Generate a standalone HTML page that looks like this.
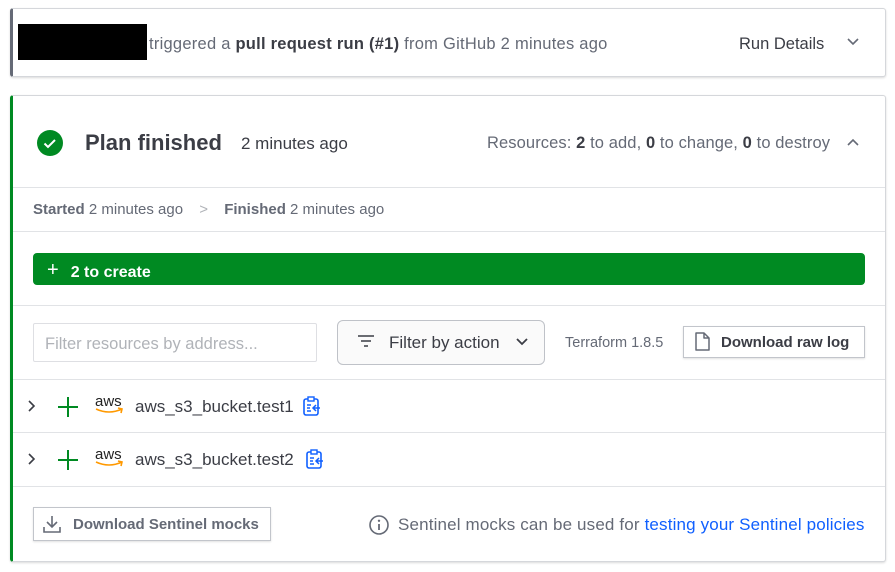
<!DOCTYPE html>
<html><head><meta charset="utf-8"><style>
*{box-sizing:border-box;margin:0;padding:0}
body{width:895px;height:572px;background:#fff;font-family:"Liberation Sans",sans-serif;color:#656a76;position:relative;overflow:hidden}
.abs{position:absolute;white-space:nowrap}
.card{position:absolute;background:#fff;border:1px solid #d5d7db;border-radius:3px;box-shadow:0 1px 2px rgba(0,0,0,.15)}
.hr{position:absolute;left:13px;width:872px;height:1px;background:#e1e3e6}
b{color:#3b3d45}
.btn{position:absolute;border:1px solid #c2c5cb;background:#fff;box-shadow:0 1px 2px rgba(0,0,0,.12)}
</style></head><body>
<div class="card" style="left:10px;top:8px;width:876px;height:69px;border-left:3px solid #656a76"></div>
<div class="abs" style="left:18px;top:24px;width:129px;height:36px;background:#000"></div>
<div class="abs" style="left:149px;top:35px;font-size:16.5px;letter-spacing:0.25px">triggered a <b>pull request run (#1)</b> from GitHub 2 minutes ago</div>
<div class="abs" style="left:739px;top:35px;font-size:16.5px;color:#3b3d45">Run Details</div>
<svg class="abs" style="left:846px;top:37px" width="14" height="10"><path d="M2 2l5 5 5-5" fill="none" stroke="#656a76" stroke-width="1.6"/></svg>

<div class="card" style="left:10px;top:95px;width:876px;height:467px;border-left:3px solid #008a22"></div>
<svg class="abs" style="left:36px;top:129px" width="28" height="28"><circle cx="14" cy="14" r="13" fill="#008a22"/><path d="M8.5 14.5l3.5 3.5 7-7" fill="none" stroke="#fff" stroke-width="2"/></svg>
<div class="abs" style="left:85px;top:130px;font-size:22px;font-weight:bold;color:#3b3d45">Plan finished</div>
<div class="abs" style="left:241px;top:134px;font-size:17px;color:#3b3d45">2 minutes ago</div>
<div class="abs" style="left:487px;top:134px;font-size:16.5px;letter-spacing:0.1px">Resources: <b>2</b> to add, <b>0</b> to change, <b>0</b> to destroy</div>
<svg class="abs" style="left:846px;top:137px" width="14" height="10"><path d="M2 8l5-5 5 5" fill="none" stroke="#656a76" stroke-width="1.6"/></svg>
<div class="hr" style="top:187px"></div>
<div class="abs" style="left:33px;top:201px;font-size:15px"><b style="color:#656a76">Started</b> 2 minutes ago <span style="color:#b0b3b8;margin:0 12px">&gt;</span> <b style="color:#656a76">Finished</b> 2 minutes ago</div>
<div class="hr" style="top:231px"></div>
<div class="abs" style="left:33px;top:253px;width:832px;height:32px;background:#008a22;border-radius:4px;color:#fff;font-size:16px;font-weight:bold;padding:7px 0 0 14px"><span style="font-size:20px;font-weight:normal;margin-right:12px;position:relative;top:-1px">+</span>2 to create</div>
<div class="hr" style="top:305px"></div>
<div class="abs" style="left:33px;top:323px;width:284px;height:39px;border:1px solid #dedfe3;border-radius:2px;color:#b0b3b8;font-size:16.5px;padding:11px 0 0 11px">Filter resources by address...</div>
<div class="abs" style="left:337px;top:320px;width:208px;height:45px;border:1px solid #bfc2c8;border-radius:6px;background:#fafafa;font-size:17px;color:#3b3d45;padding:12px 0 0 51px">Filter by action</div>
<svg class="abs" style="left:357px;top:333px" width="18" height="16"><path d="M1 3h16M4 8h10M7 13h4" stroke="#3b3d45" stroke-width="1.6"/></svg>
<svg class="abs" style="left:515px;top:337px" width="14" height="10"><path d="M2 2l5 5 5-5" fill="none" stroke="#3b3d45" stroke-width="1.8"/></svg>
<div class="abs" style="left:565px;top:335px;font-size:14.5px">Terraform 1.8.5</div>
<div class="btn" style="left:683px;top:326px;width:182px;height:32px;font-size:15px;font-weight:bold;color:#3b3d45;padding:7px 0 0 37px">Download raw log</div>
<svg class="abs" style="left:694px;top:332px" width="16" height="20"><path d="M2 1h8l5 5v12H2z M10 1v5h5" fill="none" stroke="#656a76" stroke-width="1.5" stroke-linejoin="round"/></svg>
<div class="hr" style="top:379px"></div>
<div class="hr" style="top:432px"></div>
<div class="hr" style="top:486px"></div>

<svg class="abs" style="left:27px;top:399px" width="10" height="14"><path d="M2 2l5 5-5 5" fill="none" stroke="#3b3d45" stroke-width="1.6"/></svg>
<svg class="abs" style="left:57px;top:396px" width="22" height="22"><path d="M11 1v20M1 11h20" stroke="#008a22" stroke-width="2"/></svg>
<div class="abs" style="left:95px;top:393px;font-size:15px;color:#222">aws</div>
<svg class="abs" style="left:94px;top:407px" width="32" height="8"><path d="M2 2q13 6 26 0M24 1l4 1-1 4" fill="none" stroke="#f90" stroke-width="1.6"/></svg>
<div class="abs" style="left:135px;top:397px;font-size:17px;color:#3b3d45">aws_s3_bucket.test1</div>
<svg class="abs" style="left:302px;top:396px" width="20" height="20"><rect x="2" y="3" width="14" height="16" rx="2" fill="none" stroke="#1060ff" stroke-width="1.6"/><rect x="6" y="1" width="6" height="4" fill="#fff" stroke="#1060ff" stroke-width="1.4"/><path d="M5 9h4M5 12h3M5 15h4M18 12h-7M14 9l-3 3 3 3" fill="none" stroke="#1060ff" stroke-width="1.5"/></svg>

<svg class="abs" style="left:27px;top:452px" width="10" height="14"><path d="M2 2l5 5-5 5" fill="none" stroke="#3b3d45" stroke-width="1.6"/></svg>
<svg class="abs" style="left:57px;top:449px" width="22" height="22"><path d="M11 1v20M1 11h20" stroke="#008a22" stroke-width="2"/></svg>
<div class="abs" style="left:95px;top:446px;font-size:15px;color:#222">aws</div>
<svg class="abs" style="left:94px;top:460px" width="32" height="8"><path d="M2 2q13 6 26 0M24 1l4 1-1 4" fill="none" stroke="#f90" stroke-width="1.6"/></svg>
<div class="abs" style="left:135px;top:450px;font-size:17px;color:#3b3d45">aws_s3_bucket.test2</div>
<svg class="abs" style="left:305px;top:449px" width="20" height="20"><rect x="2" y="3" width="14" height="16" rx="2" fill="none" stroke="#1060ff" stroke-width="1.6"/><rect x="6" y="1" width="6" height="4" fill="#fff" stroke="#1060ff" stroke-width="1.4"/><path d="M5 9h4M5 12h3M5 15h4M18 12h-7M14 9l-3 3 3 3" fill="none" stroke="#1060ff" stroke-width="1.5"/></svg>

<div class="btn" style="left:33px;top:507px;width:238px;height:34px;font-size:15px;font-weight:bold;color:#656a76;padding:8px 0 0 39px">Download Sentinel mocks</div>
<svg class="abs" style="left:42px;top:514px" width="20" height="20"><path d="M10 2v11M5 8l5 5 5-5M2 13v5h16v-5" fill="none" stroke="#656a76" stroke-width="1.6"/></svg>
<svg class="abs" style="left:368px;top:514px" width="22" height="22"><circle cx="11" cy="11" r="9" fill="none" stroke="#656a76" stroke-width="1.6"/><path d="M11 10v6" stroke="#656a76" stroke-width="1.8"/><circle cx="11" cy="6.8" r="1.2" fill="#656a76"/></svg>
<div class="abs" style="left:398px;top:515px;font-size:17px;letter-spacing:0.15px">Sentinel mocks can be used for <span style="color:#1060ff">testing your Sentinel policies</span></div>
</body></html>
